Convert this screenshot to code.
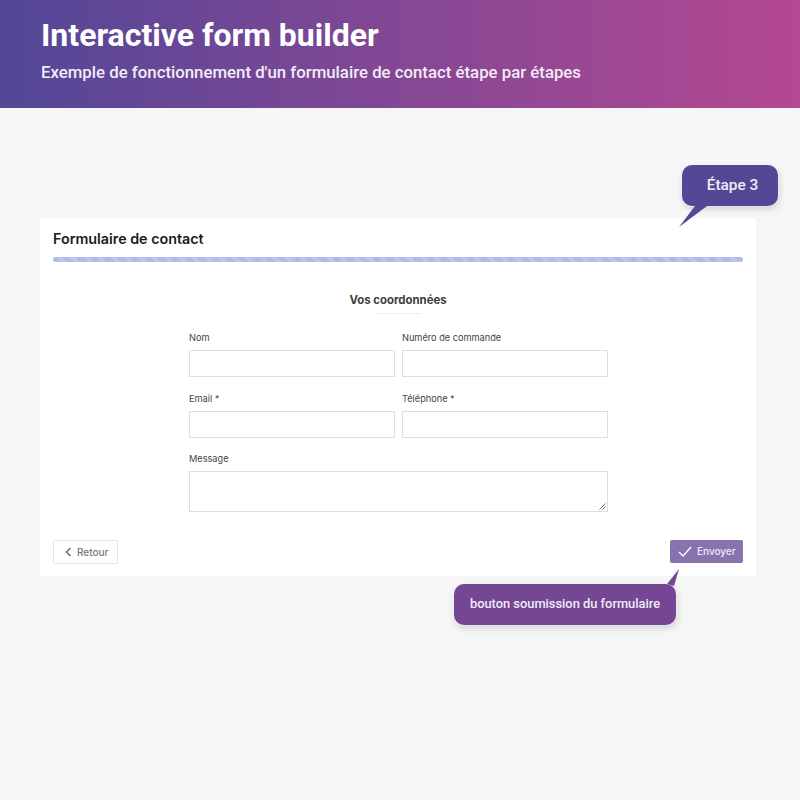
<div class="page">
  <header class="hero">
    <h1>Interactive form builder</h1>
    <p>Exemple de fonctionnement d'un formulaire de contact étape par étapes</p>
  </header>

  <main class="main">
    <section class="card">
      <h2>Formulaire de contact</h2>
      <div class="progress"></div>

      <h3>Vos coordonnées</h3>
      <div class="rule"></div>

      <form class="form">
        <div class="field">
          <span class="label">Nom</span>
          <div class="input"></div>
        </div>
        <div class="field">
          <span class="label">Numéro de commande</span>
          <div class="input"></div>
        </div>
        <div class="field">
          <span class="label">Email *</span>
          <div class="input"></div>
        </div>
        <div class="field">
          <span class="label">Téléphone *</span>
          <div class="input"></div>
        </div>
        <div class="field wide">
          <span class="label">Message</span>
          <div class="input area">
            <svg class="grip" width="7" height="7" viewBox="0 0 7 7">
              <path d="M0.5 6.5 L6.5 0.5 M3.5 6.5 L6.5 3.5" stroke="#777" stroke-width="1" fill="none" />
            </svg>
          </div>
        </div>
      </form>

      <div class="actions">
        <div class="btn back">
          <svg width="7" height="10" viewBox="0 0 7 10">
            <path d="M5.5 1 L1.5 5 L5.5 9" stroke="#666" stroke-width="1.4" fill="none" />
          </svg>
          <span>Retour</span>
        </div>
        <div class="btn send">
          <svg width="14" height="11" viewBox="0 0 14 11">
            <path d="M1 6 L5 10 L13 1" stroke="#fff" stroke-width="1.4" fill="none" />
          </svg>
          <span>Envoyer</span>
        </div>
      </div>
    </section>

    <div class="bubble step">
      Étape 3
      <svg class="tail" width="32" height="24" viewBox="0 0 32 24">
        <path d="M17 0 L1 21 L29 0 Z" fill="#544796" />
      </svg>
    </div>

    <div class="bubble submit">
      bouton soumission du formulaire
      <svg class="tail" width="20" height="20" viewBox="0 0 20 20">
        <path d="M14 0 L2 15 L9 17 Z" fill="#744694" />
      </svg>
    </div>
  </main>
</div>

<style>
  :global(body) {
    margin: 0;
    background: #f6f6f6;
  }
  .page {
    height: 800px;
    overflow: hidden;
    background: #f6f6f6;
    font-family: Inter, "Liberation Sans", sans-serif;
  }
  .hero {
    height: 108px;
    box-sizing: border-box;
    padding: 17px 41px 0;
    background: linear-gradient(90deg, #524797, #b54892);
    color: #fff;
    font-family: Roboto, sans-serif;
  }
  .hero h1 {
    margin: 0;
    font-size: 32px;
    line-height: 36px;
    font-weight: 700;
  }
  .hero p {
    margin: 9px 0 0;
    font-size: 16.8px;
    line-height: 20px;
    font-weight: 500;
    color: #f3ecf6;
  }
  .main {
    position: relative;
    padding: 110px 44px 0 40px;
  }
  .card {
    background: #fff;
    height: 358px;
    box-sizing: border-box;
    padding: 13px 13px 0;
    display: flex;
    flex-direction: column;
  }
  h2 {
    margin: 0;
    font-size: 14.3px;
    line-height: 16px;
    font-weight: 600;
    color: #1c1c1c;
  }
  .progress {
    margin-top: 10px;
    height: 5px;
    border-radius: 3px;
    background: repeating-linear-gradient(
      45deg,
      #afbbe9 0 6px,
      #bcc7ee 6px 9.5px
    );
  }
  h3 {
    margin: 31px 0 0;
    text-align: center;
    font-size: 11.4px;
    line-height: 14px;
    font-weight: 700;
    color: #3d3d3d;
  }
  .rule {
    width: 45px;
    height: 1px;
    margin: 6px auto 0;
    background: #eceff1;
  }
  .form {
    margin: 18px 0 0 136px;
    width: 419px;
    display: grid;
    grid-template-columns: 206px 206px;
    column-gap: 7px;
    row-gap: 15.5px;
  }
  .field {
    display: flex;
    flex-direction: column;
    gap: 6px;
  }
  .wide {
    grid-column: 1 / 3;
  }
  .label {
    font-size: 9.2px;
    line-height: 12px;
    color: #444;
  }
  .input {
    height: 27px;
    box-sizing: border-box;
    border: 1px solid #dedede;
    background: #fff;
  }
  .area {
    height: 41px;
    display: flex;
    justify-content: flex-end;
    align-items: flex-end;
  }
  .grip {
    margin: 0 1px 1px 0;
  }
  .actions {
    margin-top: 28px;
    display: flex;
    justify-content: space-between;
    align-items: flex-start;
  }
  .btn {
    display: flex;
    align-items: center;
    box-sizing: border-box;
    font-size: 10px;
    font-weight: 500;
    border-radius: 2px;
  }
  .back {
    width: 65px;
    height: 24px;
    gap: 5px;
    padding-left: 11px;
    border: 1px solid #e4e4e4;
    color: #777;
  }
  .send {
    width: 73px;
    height: 23px;
    gap: 5px;
    padding: 0 0 1px 8px;
    background: #8873ae;
    color: #eee9f5;
  }
  .bubble {
    position: absolute;
    box-sizing: border-box;
    display: flex;
    align-items: center;
    justify-content: center;
    border-radius: 10px;
    font-family: Roboto, sans-serif;
    font-weight: 500;
    color: #f1edf7;
    box-shadow: 0 0 0 1px rgba(255, 255, 255, 0.35), 1px 3px 7px rgba(0, 0, 0, 0.16);
  }
  .tail {
    position: absolute;
    display: block;
  }
  .step {
    left: 682px;
    top: 57px;
    width: 96px;
    height: 41px;
    padding: 0 0 2px 5px;
    font-size: 15.4px;
    background: #544796;
  }
  .step .tail {
    left: -4px;
    top: 41px;
  }
  .submit {
    left: 454px;
    top: 476px;
    width: 222px;
    height: 41px;
    padding-bottom: 2px;
    font-size: 12.85px;
    background: #744694;
  }
  .submit .tail {
    left: 211px;
    top: -15px;
  }
</style>
